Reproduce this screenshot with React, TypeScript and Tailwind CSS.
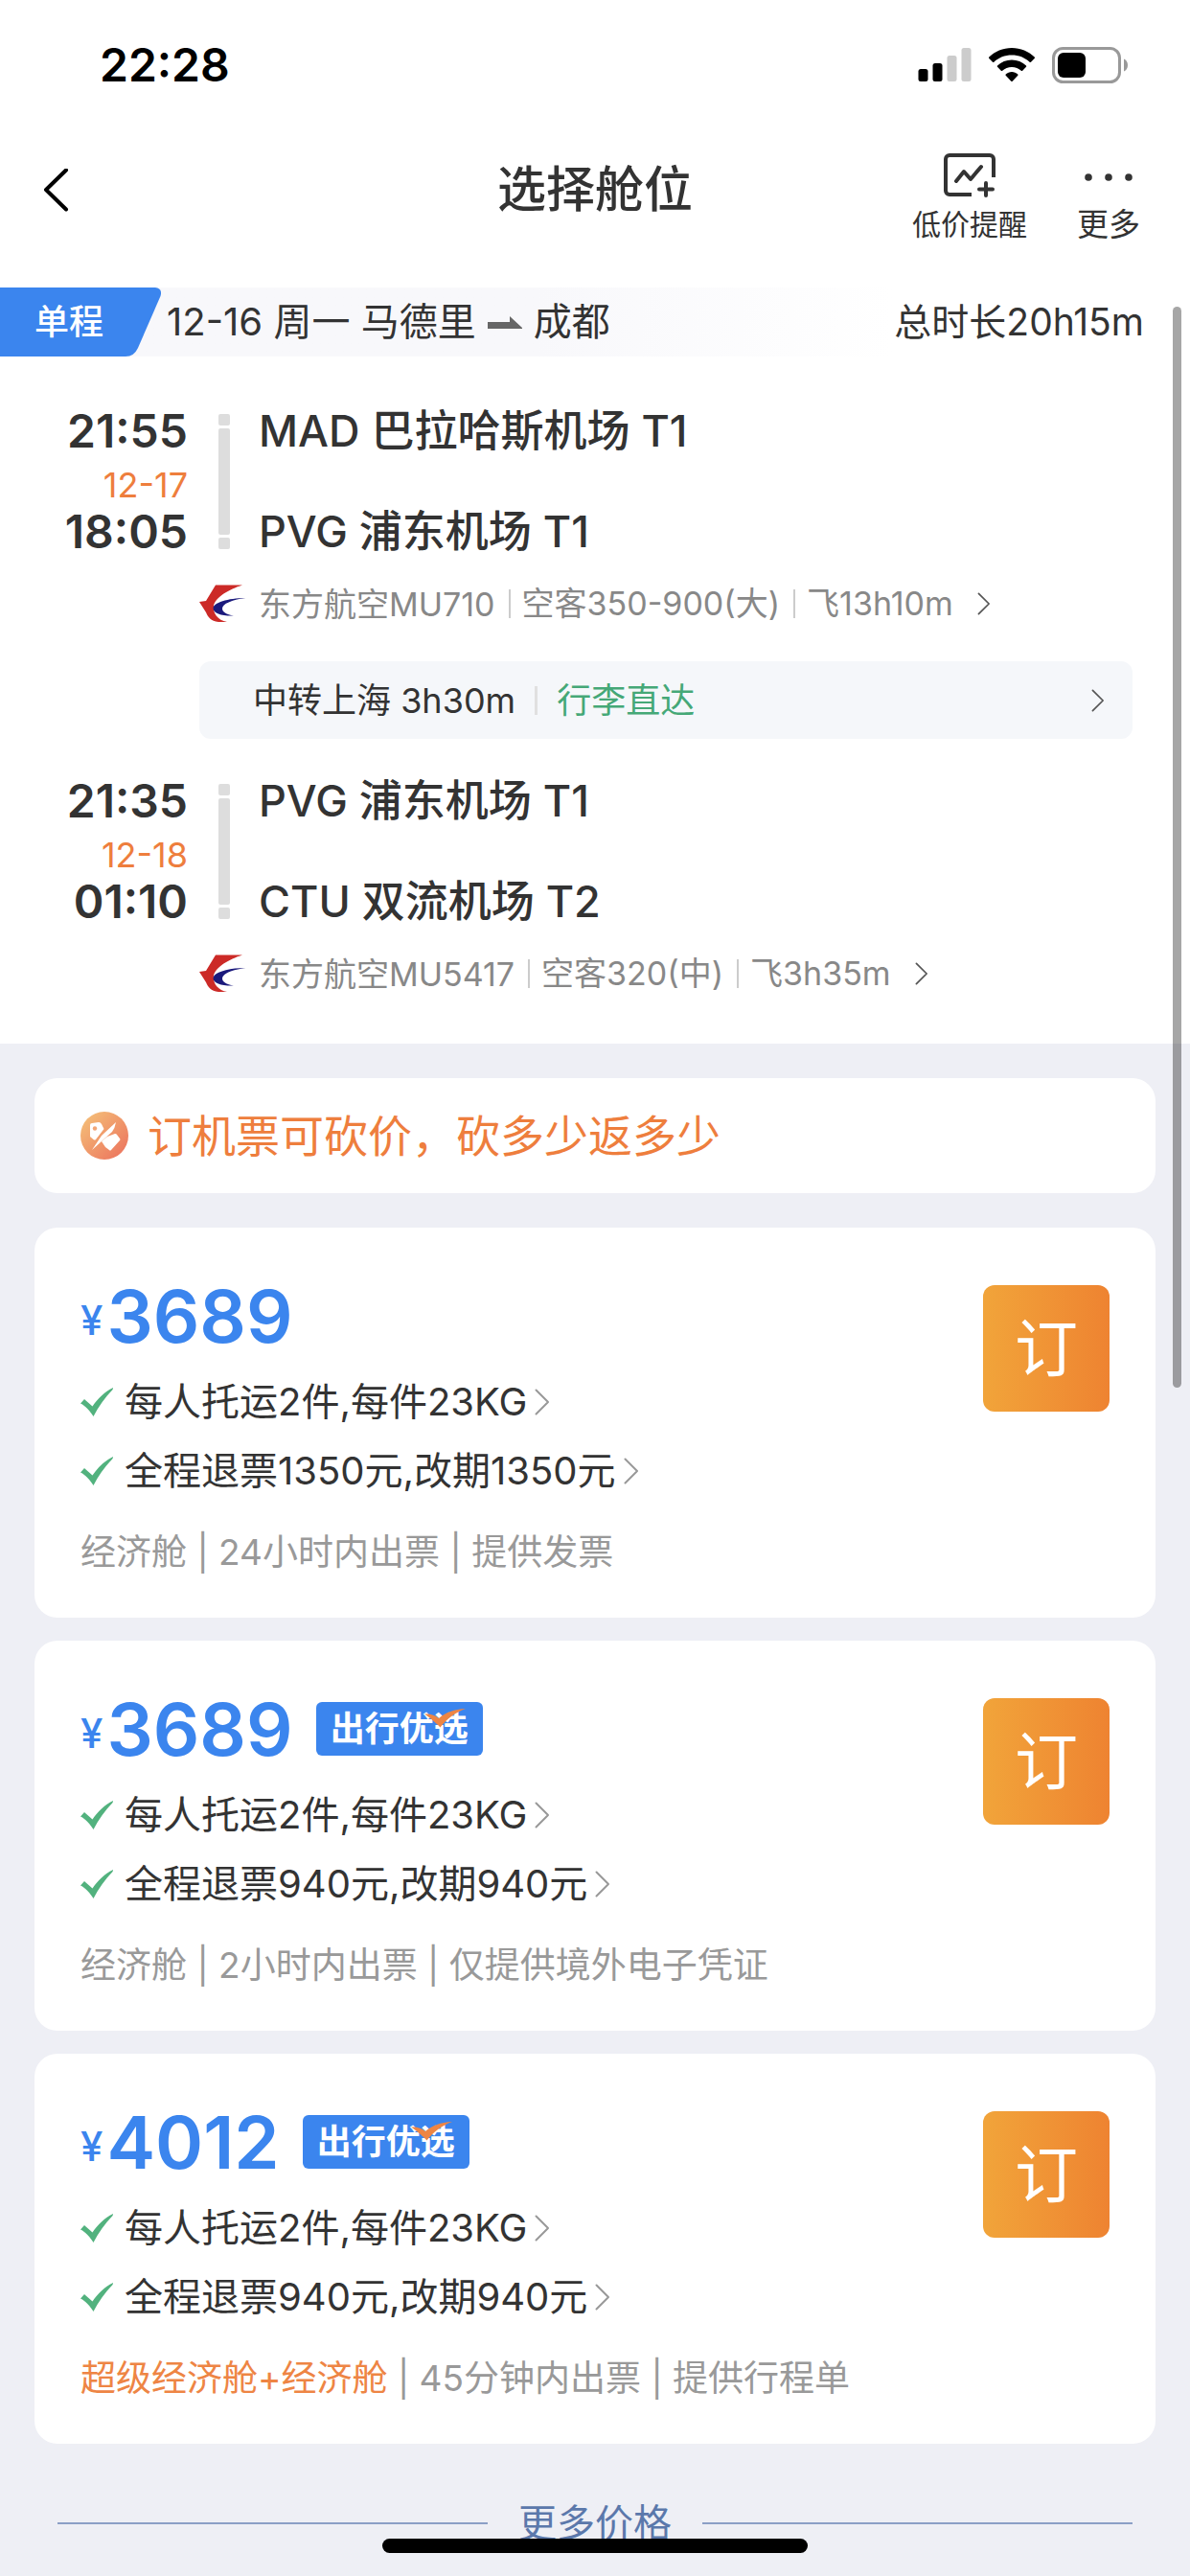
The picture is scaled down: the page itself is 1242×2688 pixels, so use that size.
type Segment = {
  depart: string;
  arrive: string;
  arriveDate: string;
  from: string;
  to: string;
  details: string[];
};

type Offer = {
  id: number;
  price: string;
  preferred: boolean;
  rules: string[];
  cabin: string;
  upgraded: boolean;
  notes: string[];
};

const firstLeg: Segment = {
  depart: "21:55",
  arrive: "18:05",
  arriveDate: "12-17",
  from: "MAD 巴拉哈斯机场 T1",
  to: "PVG 浦东机场 T1",
  details: ["东方航空MU710", "空客350-900(大)", "飞13h10m"],
};

const secondLeg: Segment = {
  depart: "21:35",
  arrive: "01:10",
  arriveDate: "12-18",
  from: "PVG 浦东机场 T1",
  to: "CTU 双流机场 T2",
  details: ["东方航空MU5417", "空客320(中)", "飞3h35m"],
};

const offers: Offer[] = [
  {
    id: 1,
    price: "3689",
    preferred: false,
    rules: ["每人托运2件,每件23KG", "全程退票1350元,改期1350元"],
    cabin: "经济舱",
    upgraded: false,
    notes: ["24小时内出票", "提供发票"],
  },
  {
    id: 2,
    price: "3689",
    preferred: true,
    rules: ["每人托运2件,每件23KG", "全程退票940元,改期940元"],
    cabin: "经济舱",
    upgraded: false,
    notes: ["2小时内出票", "仅提供境外电子凭证"],
  },
  {
    id: 3,
    price: "4012",
    preferred: true,
    rules: ["每人托运2件,每件23KG", "全程退票940元,改期940元"],
    cabin: "超级经济舱+经济舱",
    upgraded: true,
    notes: ["45分钟内出票", "提供行程单"],
  },
];

function Chevron({ className }: { className: string }) {
  return (
    <svg viewBox="0 0 16 28" className={className} fill="none" stroke="currentColor" strokeWidth="2" strokeLinecap="round" strokeLinejoin="round" aria-hidden="true">
      <path d="M1.5 1.5 14 14 1.5 26.5" />
    </svg>
  );
}

function StatusBar() {
  return (
    <div className="flex h-34 items-center justify-between pr-16 pl-26 text-black">
      <span className="text-5xl font-semibold">22:28</span>
      <div className="flex items-center gap-[18px]">
        <svg viewBox="0 0 55 36" className="h-9 w-14" aria-hidden="true">
          <rect x="0" y="22" width="10" height="13" rx="2.5" />
          <rect x="15" y="16" width="10" height="19" rx="2.5" />
          <rect x="30" y="8" width="10" height="27" rx="2.5" fill="#ccc" />
          <rect x="45" y="0" width="10" height="35" rx="2.5" fill="#ccc" />
        </svg>
        <svg viewBox="0 0 48 36" className="h-9 w-12" aria-hidden="true">
          <path d="M24 0C14.800 0 6.400 3.600 0.300 9.500c-.4.400-.4 1 0 1.400l3.700 3.800c.4.400 1 .4 1.400 0C10.200 10.100 16.800 7.500 24 7.500s13.800 2.600 18.600 7.200c.4.400 1 .4 1.400 0l3.700-3.800c.4-.4.400-1 0-1.400C41.600 3.600 33.200 0 24 0Z" />
          <path d="M24 12.500c-5.800 0-11 2.200-15 5.900-.4.400-.4 1 0 1.400l3.800 3.900c.4.400 1 .4 1.400 0 2.600-2.400 6-3.800 9.800-3.800s7.200 1.400 9.800 3.800c.4.400 1 .4 1.400 0l3.800-3.900c.4-.4.400-1 0-1.400-4-3.700-9.200-5.900-15-5.900Z" />
          <path d="M24 25c-2.400 0-4.600.9-6.300 2.400-.4.400-.4 1 0 1.400l5.600 5.900c.4.400 1 .4 1.400 0l5.600-5.900c.4-.4.400-1 0-1.400C28.600 25.900 26.400 25 24 25Z" />
        </svg>
        <svg viewBox="0 0 80 38" className="h-[38px] w-20" aria-hidden="true">
          <rect x="1.500" y="1.500" width="69" height="35" rx="10" fill="none" stroke="#999" strokeWidth="3" />
          <rect x="6" y="6" width="29" height="26" rx="6" />
          <path d="M75 12.500c2.500 1 4 3.500 4 6.500s-1.500 5.500-4 6.500Z" fill="#999" />
        </svg>
      </div>
    </div>
  );
}

function Header() {
  return (
    <header className="grid h-41 grid-cols-3 items-start">
      <button type="button" aria-label="返回" className="mt-10 ml-11">
        <svg viewBox="0 0 28 46" className="h-[46px] w-7" fill="none" stroke="#000" strokeWidth="4" strokeLinecap="round" strokeLinejoin="round">
          <path d="M25 1.500 4 22l21 20.500" />
        </svg>
      </button>
      <h1 className="mt-8 text-center text-[51px] leading-[60px] font-medium">选择舱位</h1>
      <div className="mt-6 flex justify-end gap-[52px] pr-13">
        <button type="button" className="flex flex-col items-center gap-[10px] text-[30px] leading-9">
          <svg viewBox="-3 0 54 46" className="h-[46px] w-[54px]" fill="none" stroke="currentColor" strokeWidth="4" strokeLinejoin="round" aria-hidden="true">
            <path d="M26 43H3a4 4 0 0 1-4-4V6a4 4 0 0 1 4-4h42a4 4 0 0 1 4 4v19" />
            <path d="m10 29 8-10 7 8 11-13" strokeLinecap="round" />
            <path d="M41 31v13M34 37.500h14" strokeLinecap="round" />
          </svg>
          低价提醒
        </button>
        <button type="button" className="flex flex-col items-center gap-[10px] text-[33px] leading-9">
          <svg viewBox="0 0 54 46" className="h-[46px] w-[54px]" fill="currentColor" aria-hidden="true">
            <circle cx="6" cy="25" r="3.800" />
            <circle cx="27" cy="25" r="3.800" />
            <circle cx="48" cy="25" r="3.800" />
          </svg>
          更多
        </button>
      </div>
    </header>
  );
}

function RouteStrip() {
  return (
    <div className="flex h-18 items-center bg-linear-to-r from-[#f8f8fb] from-45% to-white to-75% pr-12">
      <div className="relative flex h-full w-[174px] items-center">
        <svg viewBox="0 0 168 72" className="absolute top-0 left-0 h-18 w-42" aria-hidden="true">
          <path d="M0 0h162q8 1 5.500 9L144 63q-4 9-13 9H0Z" fill="#3b85ee" />
        </svg>
        <span className="relative pl-9 text-4xl font-medium text-white">单程</span>
      </div>
      <div className="flex items-center gap-3 text-[40px]">
        <span>12-16 周一 马德里</span>
        <svg viewBox="0 0 36 13" className="h-[13px] w-9" fill="#666" aria-hidden="true">
          <path d="M0 6h23V0l13 12v1H0Z" />
        </svg>
        <span>成都</span>
      </div>
      <span className="ml-auto text-[39px]">总时长20h15m</span>
    </div>
  );
}

function AirlineLogo() {
  return (
    <svg viewBox="0 0 48 40" className="h-10 w-12" aria-hidden="true">
      <path d="M17 .5h28C31 5 17 13 15 22c-1 8 4 15 14 17H20C12 38 9 34 7 29L0 18l7-1Z" fill="#cc2a27" />
      <path d="M48 14C30 14 14 19 14.500 25c.5 5 9 8 21.500 7.500-8-1.500-12-4-12-7.500 0-5 10-9 24-11Z" fill="#1b1a7c" />
    </svg>
  );
}

function FlightSegment({ segment }: { segment: Segment }) {
  return (
    <section>
      <div className="flex">
        <div className="flex w-49 flex-col text-right">
          <span className="text-5xl leading-[60px] font-semibold">{segment.depart}</span>
          <span className="pt-2 text-4xl leading-[37px] text-[#ee7e3d]">{segment.arriveDate}</span>
          <span className="text-5xl leading-[60px] font-semibold">{segment.arrive}</span>
        </div>
        <div className="ml-8 flex w-3 flex-col gap-[3px] py-3">
          <i className="h-3 rounded-xs bg-[#ddd]" />
          <i className="flex-1 rounded-xs bg-[#ddd]" />
          <i className="h-3 rounded-xs bg-[#ddd]" />
        </div>
        <div className="ml-[30px] flex flex-col justify-between text-[45px] leading-[60px] font-medium">
          <span>{segment.from}</span>
          <span>{segment.to}</span>
        </div>
      </div>
      <button type="button" className="mt-5 ml-52 flex h-[50px] items-center text-[34px] text-[#888]">
        <AirlineLogo />
        <span className="ml-[14px] flex items-center">
          {segment.details.map((detail, i) => (
            <span key={detail} className={i === 0 ? "" : "ml-[14px] border-l-2 border-[#ccc] pl-3 leading-[30px]"}>
              {detail}
            </span>
          ))}
        </span>
        <Chevron className="ml-6 h-6 w-4 text-[#555]" />
      </button>
    </section>
  );
}

function Transfer() {
  return (
    <button type="button" className="my-[35px] mr-15 ml-52 flex h-[81px] items-center rounded-xl bg-[#f5f7fa] pr-7 pl-14 text-4xl">
      <span>中转上海 3h30m</span>
      <i className="mx-5 h-[30px] w-[3px] bg-[#e0e0e0]" />
      <span className="text-[#45a877]">行李直达</span>
      <Chevron className="ml-auto h-6 w-4 text-[#555]" />
    </button>
  );
}

function Promo() {
  return (
    <a href="#promo" className="flex h-30 items-center gap-5 rounded-3xl bg-white px-12 text-[46px] text-[#ee7e3d]">
      <svg viewBox="0 0 50 50" className="size-[50px]" aria-hidden="true">
        <defs>
          <linearGradient id="promo" x1="0" y1="0" x2="1" y2="1">
            <stop offset="0.100" stopColor="#f4bc77" />
            <stop offset="0.900" stopColor="#ec775f" />
          </linearGradient>
        </defs>
        <circle cx="25" cy="25" r="25" fill="url(#promo)" />
        <path d="M10 14q0-2 2-2l7-1q2 0 3 2l2.500 5L16 29q-1 1-2.500 0L10 26Z" fill="#fff" />
        <circle cx="15" cy="17.500" r="2.200" fill="#f2a676" />
        <path d="M37 11q-1 6-4 10L12 40l10-15Z" fill="#fff" />
        <path d="m22 31 6-5 8-3q1.500 0 2 1l3 4q1 1 0 2l-9 10q-1 1-2 0l-4-3Z" fill="#fff" />
      </svg>
      订机票可砍价，砍多少返多少
    </a>
  );
}

function PreferredBadge() {
  return (
    <span className="relative ml-6 flex h-14 items-center rounded-md bg-[#3b85ee] px-[15px] text-4xl font-bold text-white">
      出行优选
      <svg viewBox="0 0 43 20" className="absolute top-[7px] right-[18px] h-5 w-[43px]" fill="#ee8544" aria-hidden="true">
        <path d="M0 5.500c6-.5 11 1 15 4.500C22 4 31 .5 43 0 32 4 24 10 16.500 19.500 13 16 8 11 0 5.500Z" />
      </svg>
    </span>
  );
}

function OfferCard({ offer }: { offer: Offer }) {
  return (
    <article className="flex items-start justify-between rounded-3xl bg-white pt-15 pr-12 pb-[41px] pl-12">
      <div>
        <div className="flex h-16 items-center text-[#3b85ee]">
          <span className="pt-2 pr-1 text-[42px] font-medium">¥</span>
          <span className="text-[76px] leading-16 font-semibold">{offer.price}</span>
          {offer.preferred && <PreferredBadge />}
        </div>
        <ul className="mt-[22px]">
          {offer.rules.map((rule) => (
            <li key={rule}>
              <button type="button" className="flex h-18 items-center text-[40px]">
                <svg viewBox="0 0 34 30" className="mr-3 h-[30px] w-[34px]" fill="#52b27e" aria-hidden="true">
                  <path d="M0 16.500 4 12l8.500 7.500C18 11.500 25 4.500 34 0c0 .8-.2 1.500-.6 2.200C26 10 19 19 13.500 30 10 24.500 5.500 19 0 16.500Z" />
                </svg>
                {rule}
                <Chevron className="ml-2 h-7 w-4 text-[#999]" />
              </button>
            </li>
          ))}
        </ul>
        <p className="mt-[22px] text-[37px] leading-[54px] text-[#999]">
          <span className={offer.upgraded ? "text-[#ee8544]" : ""}>{offer.cabin}</span>
          {offer.notes.map((note) => ` | ${note}`)}
        </p>
      </div>
      <button type="button" className="size-33 rounded-xl bg-linear-to-r from-[#f1a43a] to-[#ee8331] text-[66px] leading-none text-white">
        订
      </button>
    </article>
  );
}

export default function App() {
  return (
    <div className="relative min-h-screen bg-[#eeeff5] font-[Inter,'Noto_Sans_CJK_SC',sans-serif] text-[#333]">
      <div className="bg-white pb-12">
        <StatusBar />
        <Header />
        <RouteStrip />
        <main className="flex flex-col pt-12">
          <FlightSegment segment={firstLeg} />
          <Transfer />
          <FlightSegment segment={secondLeg} />
        </main>
      </div>

      <div className="flex flex-col gap-9 px-9 pt-9">
        <Promo />
        <div className="flex flex-col gap-6">
          {offers.map((offer) => (
            <OfferCard key={offer.id} offer={offer} />
          ))}
        </div>
      </div>

      <div className="flex h-[138px] items-center gap-8 px-15 pt-7">
        <i className="h-0.5 flex-1 bg-[#8b9fc6]" />
        <button type="button" className="text-[40px] text-[#5b78ab]">更多价格</button>
        <i className="h-0.5 flex-1 bg-[#8b9fc6]" />
      </div>

      {/* scroll thumb */}
      <div className="absolute top-80 right-[9px] h-[1128px] w-[9px] rounded-full bg-black/35" />
      {/* home indicator */}
      <div className="absolute bottom-6 left-1/2 h-[15px] w-[444px] -translate-x-1/2 rounded-full bg-black" />
    </div>
  );
}
